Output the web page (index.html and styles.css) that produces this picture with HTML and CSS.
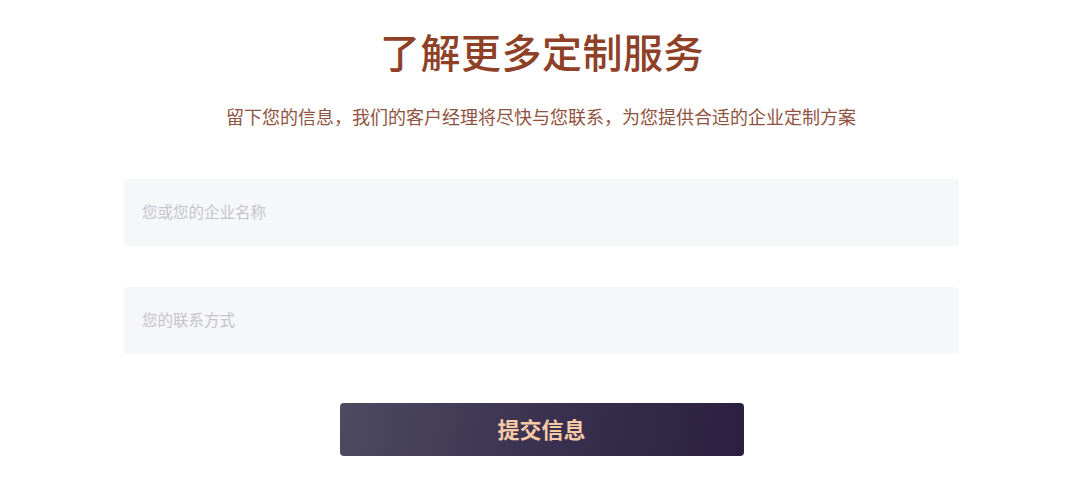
FILE: index.html
```html
<!DOCTYPE html>
<html lang="zh-CN">

<head>
    <meta charset="UTF-8">
    <meta name="viewport" content="width=device-width, initial-scale=1.0">
    <title>了解更多定制服务</title>
    <link rel="stylesheet" href="styles.css">
</head>

<body>
    <section class="contact">
        <h1 class="contact-title">了解更多定制服务</h1>
        <p class="contact-desc">留下您的信息，我们的客户经理将尽快与您联系，为您提供合适的企业定制方案</p>
        <form class="contact-form">
            <input class="field" type="text" placeholder="您或您的企业名称">
            <input class="field" type="text" placeholder="您的联系方式">
            <button class="submit" type="button">提交信息</button>
        </form>
    </section>
</body>

</html>
```

FILE: styles.css
```css
* {
    box-sizing: border-box;
    margin: 0;
    padding: 0;
}

body {
    background-color: #ffffff;
    font-family: "Noto Sans CJK SC", "Noto Sans", sans-serif;
}

.contact {
    display: flex;
    flex-direction: column;
    align-items: center;
    padding-top: 23px;
}

.contact-title {
    margin-left: 4px;
    font-size: 40px;
    line-height: 56px;
    font-weight: 500;
    color: #8e4127;
    letter-spacing: 0.5px;
}

.contact-desc {
    margin-top: 24px;
    margin-left: 2px;
    font-size: 18px;
    line-height: 26px;
    color: #8f5341;
}

.contact-form {
    width: 835px;
    margin-top: 50px;
    margin-left: 3px;
    display: flex;
    flex-direction: column;
    align-items: center;
    gap: 41px;
}

.field {
    width: 100%;
    height: 67px;
    border: none;
    outline: none;
    border-radius: 4px;
    background-color: #f6f7f9;
    padding: 0 18px 4px;
    font-family: inherit;
    font-size: 15.5px;
    color: #333333;
}

.field::placeholder {
    color: #c3c4cc;
}

.submit {
    width: 404px;
    height: 53px;
    margin-top: 8px;
    padding-bottom: 4px;
    border: none;
    border-radius: 4px;
    background: linear-gradient(100deg, #4e4a62 0%, #3a3250 50%, #2a1f40 100%);
    color: #f8cba6;
    font-family: inherit;
    font-size: 22px;
    font-weight: 700;
    cursor: pointer;
}
```
